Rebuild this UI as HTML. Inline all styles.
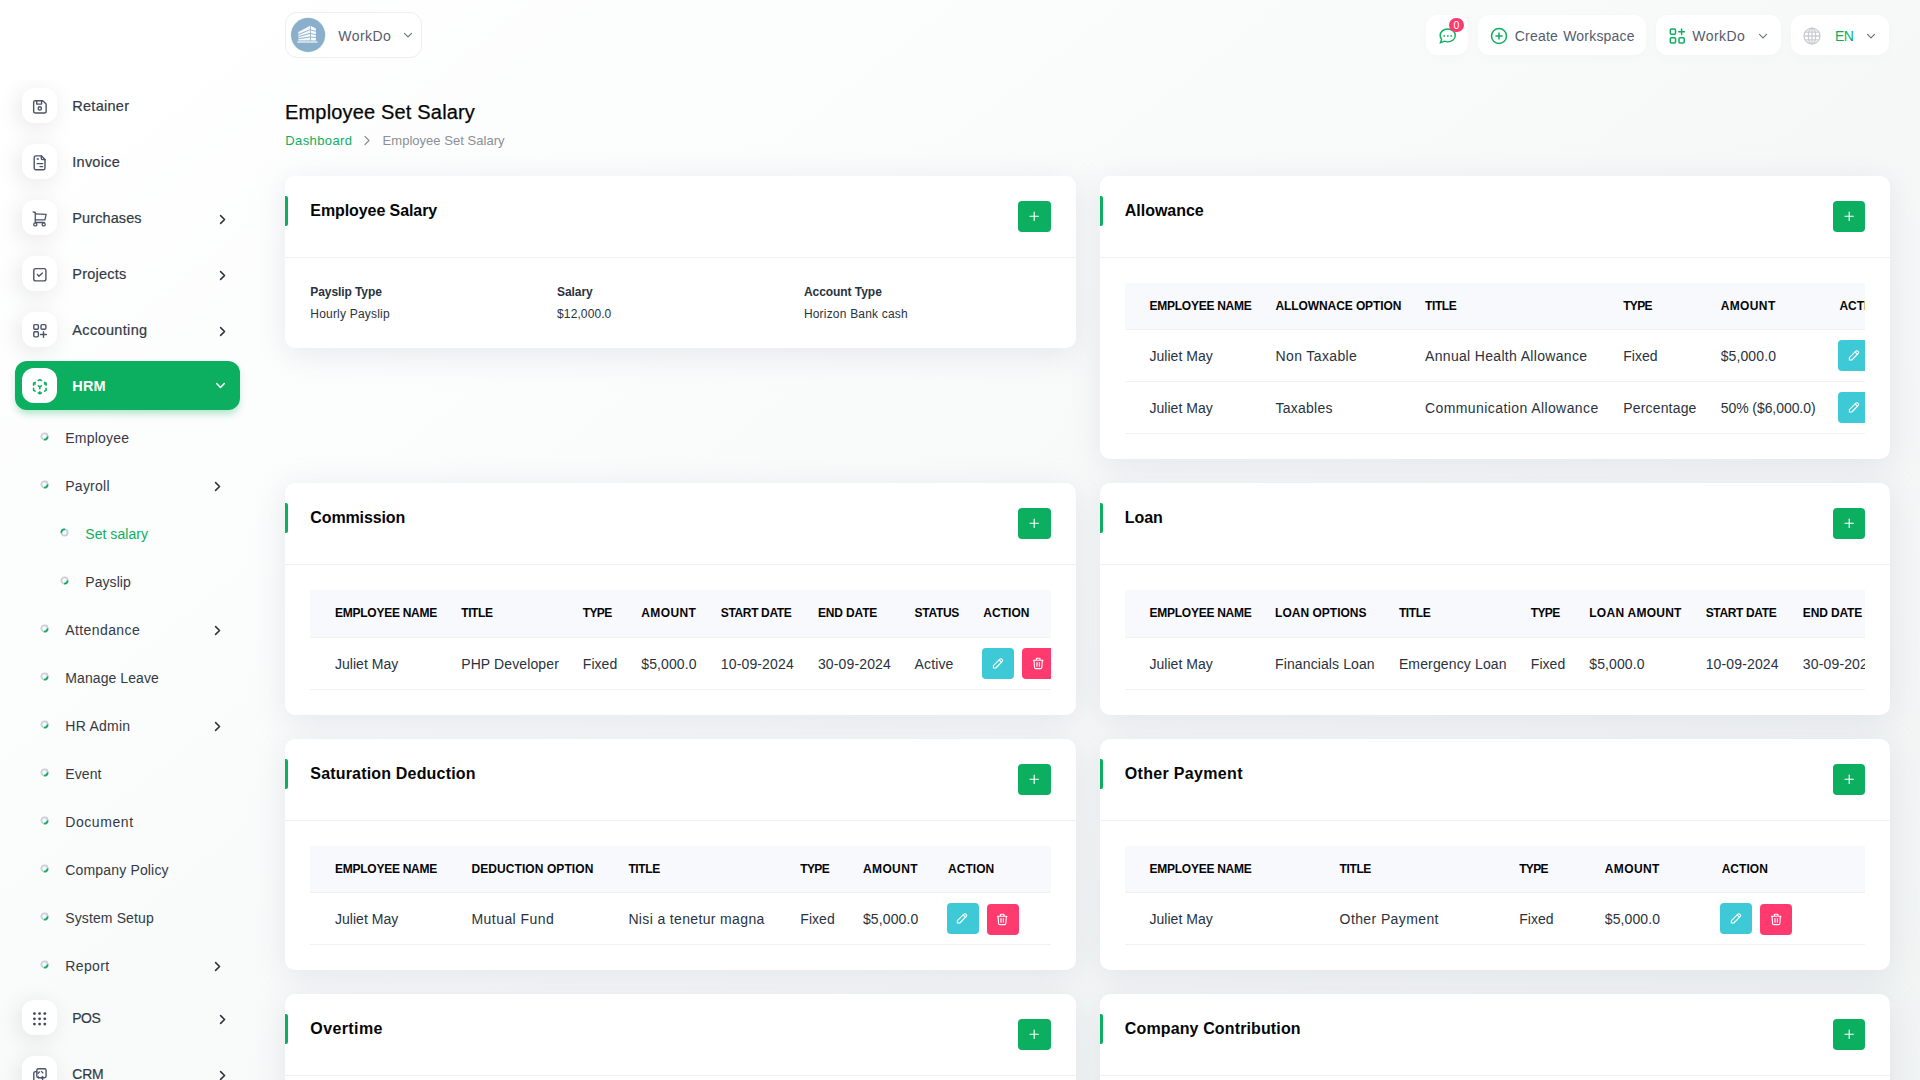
<!DOCTYPE html>
<html lang="en">
<head>
<meta charset="utf-8">
<title>Employee Set Salary</title>
<style>
*{box-sizing:border-box;margin:0;padding:0}
html,body{width:1920px;height:1080px;overflow:hidden}
body{font-family:"Liberation Sans",sans-serif;font-size:14px;color:#293240;position:relative;background:#fff}
.bg{position:absolute;left:0;top:0;width:1920px;height:1300px;background:linear-gradient(141.55deg,rgba(240,244,243,0) 3.46%,#eff3f2 99.86%),#ffffff}
svg{display:block}
a{text-decoration:none;color:inherit}
.side{position:absolute;left:0;top:80px;width:280px;height:1000px;overflow:hidden}
.mi{position:absolute;left:15px;width:225px;height:48px;border-radius:12px}
.mi .ic{position:absolute;left:7px;top:6.5px;width:35px;height:35px;border-radius:12px;background:#fff;box-shadow:-3px 4px 23px rgba(0,0,0,.1)}
.mi .tx{position:absolute;left:57.3px;top:0;line-height:48px;font-size:14.5px;color:#333a45;-webkit-text-stroke:.2px #333a45;white-space:nowrap}
.mi .ch{position:absolute;left:200.550px;top:19.400px}
.mi.act{height:48.700px;background:#0caf60;box-shadow:0 5px 7px -1px rgba(12,175,96,.3)}
.mi.act .tx{color:#fff;font-weight:700;-webkit-text-stroke:0;line-height:50px}
.mi.act .ic{box-shadow:none}
.mi.act .ch{left:198.950px;top:18.100px}
.si{position:absolute;left:0;width:260px;height:48px}
.si .bl{position:absolute;top:18.800px;width:9px;height:9px}
.si .tx{position:absolute;top:0;line-height:48px;font-size:14px;color:#333a45;white-space:nowrap}
.si .ch{position:absolute;left:210.650px;top:18.600px}
.si.l1 .bl{left:39.600px}.si.l1 .tx{left:65.300px}
.si.l2 .bl{left:59.600px}.si.l2 .tx{left:85.300px}
.si.on .tx{color:#0caf60}
.pill{position:absolute;background:#fff;border-radius:12px;height:40px;top:15px;box-shadow:0 3px 10px rgba(0,0,0,.018);font-size:14px;color:#555c6e;line-height:43.400px;white-space:nowrap}
.pill>span,.pill>svg{position:absolute}
.ws{position:absolute;left:285px;top:12px;width:137px;height:46px;border:1px solid #eeeeee;border-radius:12px;background:rgba(255,255,255,.7)}
.ws>span,.ws>svg{position:absolute}
.h1{position:absolute;left:285px;top:99px;font-weight:400;font-size:20px;line-height:26px;color:#060606;-webkit-text-stroke:.25px #060606;white-space:nowrap}
.bc{position:absolute;left:285.300px;top:132px;font-size:13px;line-height:18px;color:#8b8f96;white-space:nowrap}
.bc a{color:#0caf60}
.bc svg{position:absolute;left:77.900px;top:2.500px}
.bc b{position:absolute;left:97.300px;top:0;font-weight:400}
.card{position:absolute;width:790.500px;background:#fff;border-radius:10px;box-shadow:0 6px 30px rgba(182,186,203,.3)}
.card.L{left:285px}.card.R{left:1099.500px}
.ch1{position:relative;height:82px;border-bottom:1px solid #f1f1f1}
.ch1:before{content:"";position:absolute;left:0;top:20px;width:3px;height:30px;background:#0caf60;border-radius:0 2px 2px 0}
.ch1 h5{position:absolute;left:25.300px;top:24px;font-size:16px;line-height:22px;font-weight:700;color:#060606;white-space:nowrap}
.add{position:absolute;right:25px;top:25px;width:32.300px;height:31px;border-radius:4px;background:#0caf60;display:flex;align-items:center;justify-content:center}
.cb{padding:25px}
.tw{width:740.500px;overflow:hidden}
table{border-collapse:collapse;table-layout:fixed}
th{height:47px;background:#f8f9fd;font-size:12px;font-weight:700;color:#060606;text-align:left;padding:0 0 0 12px;white-space:nowrap;border-bottom:1px solid #f1f1f1;overflow:hidden}
td{height:52px;font-size:14px;color:#293240;text-align:left;padding:0 0 0 12px;white-space:nowrap;border-bottom:1px solid #f1f1f1;overflow:hidden}
th:first-child,td:first-child{padding-left:25px}
td>span{position:relative;top:1px}
.ab{display:inline-flex;vertical-align:middle;width:32px;height:31px;border-radius:4px;align-items:center;justify-content:center}
.ab.e{background:#3ec9d6;margin-left:-1.500px;margin-right:8px}.ab.d{background:#ff3a6e}
.lb{font-size:12px;font-weight:700;color:#293240;line-height:18px}
.vl{font-size:12px;color:#293240;line-height:18px;margin-top:3.600px}
</style>
</head>
<body>
<div class="bg"></div>
<nav class="side">
<a class="mi" style="top:1.5px"><span class="ic"><svg width="35" height="35" viewBox="0 0 35 35" fill="none" stroke="#4b5567" stroke-width="1.4" stroke-linecap="round" stroke-linejoin="round"><path d="M13.250 12.750H20.700L24.150 16.100V23.450A1.600 1.600 0 0 1 22.550 25.050H13.250A1.600 1.600 0 0 1 11.650 23.450V14.350A1.600 1.600 0 0 1 13.250 12.750Z"/><path d="M14.700 12.900V16.100H19.600V12.900"/><circle cx="17.800" cy="20.400" r="1.600"/></svg></span><span class="tx"><span style="letter-spacing:0.268px">Retainer</span></span></a>
<a class="mi" style="top:57.5px"><span class="ic"><svg width="35" height="35" viewBox="0 0 35 35" fill="none" stroke="#4b5567" stroke-width="1.4" stroke-linecap="round" stroke-linejoin="round"><path d="M19.300 11.850H13.900A1.700 1.700 0 0 0 12.200 13.550V24.100A1.700 1.700 0 0 0 13.900 25.800H21.300A1.700 1.700 0 0 0 23 24.100V15.600Z"/><path d="M19.300 11.850V14.500A1.100 1.100 0 0 0 20.400 15.600H23"/><path d="M15.200 15.050H16.400M15.200 19.650H20.700M18 22.600H20.700"/></svg></span><span class="tx"><span style="letter-spacing:0.243px">Invoice</span></span></a>
<a class="mi" style="top:113.5px"><span class="ic"><svg width="35" height="35" viewBox="0 0 35 35" fill="none" stroke="#4b5567" stroke-width="1.3" stroke-linecap="round" stroke-linejoin="round"><path d="M11.100 11.900 13.300 12.500V22.500H22.100"/><path d="M13.300 13.850 24.100 14.450 22.900 19.900H13.300"/><circle cx="13.300" cy="24.400" r="1.550"/><circle cx="21.700" cy="24.400" r="1.550"/></svg></span><span class="tx"><span style="letter-spacing:0.099px">Purchases</span></span><svg class="ch" width="13" height="13" viewBox="0 0 13 13" fill="none" stroke="#2f3136" stroke-width="1.550" stroke-linecap="round" stroke-linejoin="round"><path d="M4.600 2.650 8.550 6.500 4.600 10.350"/></svg></a>
<a class="mi" style="top:169.5px"><span class="ic"><svg width="35" height="35" viewBox="0 0 35 35" fill="none" stroke="#4b5567" stroke-width="1.4" stroke-linecap="round" stroke-linejoin="round"><rect x="11.800" y="12.600" width="12.100" height="12.300" rx="2"/><path d="M15.400 18.400 16.900 20.200 20.400 16.900"/></svg></span><span class="tx"><span style="letter-spacing:0.227px">Projects</span></span><svg class="ch" width="13" height="13" viewBox="0 0 13 13" fill="none" stroke="#2f3136" stroke-width="1.550" stroke-linecap="round" stroke-linejoin="round"><path d="M4.600 2.650 8.550 6.500 4.600 10.350"/></svg></a>
<a class="mi" style="top:225.5px"><span class="ic"><svg width="35" height="35" viewBox="0 0 35 35" fill="none" stroke="#4b5567" stroke-width="1.4" stroke-linecap="round" stroke-linejoin="round"><rect x="11.800" y="12.600" width="4.600" height="4.700" rx="1.100"/><rect x="19" y="12.600" width="4.900" height="4.700" rx="1.100"/><rect x="11.800" y="19.800" width="4.600" height="5.100" rx="1.100"/><path d="M21.500 19.700V25.300M18.600 22.450H24.400"/></svg></span><span class="tx"><span style="letter-spacing:0.342px">Accounting</span></span><svg class="ch" width="13" height="13" viewBox="0 0 13 13" fill="none" stroke="#2f3136" stroke-width="1.550" stroke-linecap="round" stroke-linejoin="round"><path d="M4.600 2.650 8.550 6.500 4.600 10.350"/></svg></a>
<a class="mi act" style="top:281px"><span class="ic"><svg width="35" height="35" viewBox="0 0 35 35" fill="none" stroke="#0caf60" stroke-width="2.0" stroke-linecap="round" stroke-linejoin="round"><g transform="translate(8.490 9.340) scale(.78)"><path d="M6 17.600l-2-1.100v-2.500M4 10v-2.500l2-1.120M10 4.100l2-1.100l2 1.100M18 6.400l2 1.100v2.500M20 14v2.500l-2 1.120M14 19.900l-2 1.100l-2-1.100M12 12l2-1.100M18 8.600l2-1.100M12 12v2.500M12 18.500v2.500M12 12l-2-1.120M6 8.600l-2-1.100"/></g></svg></span><span class="tx"><span style="letter-spacing:0.167px">HRM</span></span><svg class="ch" width="13" height="13" viewBox="0 0 13 13" fill="none" stroke="#fff" stroke-width="1.550" stroke-linecap="round" stroke-linejoin="round"><path d="M2.650 4.500 6.500 8.500 10.350 4.500"/></svg></a>
<a class="mi" style="top:913.5px"><span class="ic"><svg width="35" height="35" viewBox="0 0 35 35" fill="#3f4859"><circle cx="12.4" cy="13.6" r="1.400"/><circle cx="12.4" cy="18.8" r="1.400"/><circle cx="12.4" cy="24.1" r="1.400"/><circle cx="17.6" cy="13.6" r="1.400"/><circle cx="17.6" cy="18.8" r="1.400"/><circle cx="17.6" cy="24.1" r="1.400"/><circle cx="22.8" cy="13.6" r="1.400"/><circle cx="22.8" cy="18.8" r="1.400"/><circle cx="22.8" cy="24.1" r="1.400"/></svg></span><span class="tx"><span style="font-size:13.9px;letter-spacing:-0.464px">POS</span></span><svg class="ch" width="13" height="13" viewBox="0 0 13 13" fill="none" stroke="#2f3136" stroke-width="1.550" stroke-linecap="round" stroke-linejoin="round"><path d="M4.600 2.650 8.550 6.500 4.600 10.350"/></svg></a>
<a class="mi" style="top:969.5px"><span class="ic"><svg width="35" height="35" viewBox="0 0 35 35" fill="none" stroke="#4b5567" stroke-width="1.4" stroke-linecap="round" stroke-linejoin="round"><rect x="14.800" y="12.800" width="9.300" height="9" rx="1.700"/><path d="M14.800 15.600H13.500A1.700 1.700 0 0 0 11.800 17.300V24.500"/><path d="M16 17.300 17.400 15.900M19.600 15.600 20.800 16.900M16.200 20.800 16.700 21.800M19.400 21.900 20.600 20.500V23.500"/></svg></span><span class="tx"><span style="font-size:13.9px;letter-spacing:-0.172px">CRM</span></span><svg class="ch" width="13" height="13" viewBox="0 0 13 13" fill="none" stroke="#2f3136" stroke-width="1.550" stroke-linecap="round" stroke-linejoin="round"><path d="M4.600 2.650 8.550 6.500 4.600 10.350"/></svg></a>
<a class="si l1" style="top:333.5px"><svg class="bl" width="9" height="9" viewBox="0 0 9 9" fill="none" stroke-linecap="round"><circle cx="4.500" cy="4.500" r="3.150" stroke="#c8cdd9" stroke-width="1.700"/><path d="M7.600 5.000A3.150 3.150 0 0 1 4.800 7.640" stroke="#0caf60" stroke-width="1.700"/></svg><span class="tx"><span style="letter-spacing:0.217px">Employee</span></span></a>
<a class="si l1" style="top:381.5px"><svg class="bl" width="9" height="9" viewBox="0 0 9 9" fill="none" stroke-linecap="round"><circle cx="4.500" cy="4.500" r="3.150" stroke="#c8cdd9" stroke-width="1.700"/><path d="M7.600 5.000A3.150 3.150 0 0 1 4.800 7.640" stroke="#0caf60" stroke-width="1.700"/></svg><span class="tx"><span style="letter-spacing:0.234px">Payroll</span></span><svg class="ch" width="13" height="13" viewBox="0 0 13 13" fill="none" stroke="#2f3136" stroke-width="1.550" stroke-linecap="round" stroke-linejoin="round"><path d="M4.600 2.650 8.550 6.500 4.600 10.350"/></svg></a>
<a class="si l2 on" style="top:429.5px"><svg class="bl" width="9" height="9" viewBox="0 0 9 9" fill="none" stroke-linecap="round"><circle cx="4.500" cy="4.500" r="3.150" stroke="#c8cdd9" stroke-width="1.700"/><path d="M1.350 4.300A3.150 3.150 0 0 1 4.300 1.350" stroke="#0caf60" stroke-width="1.700"/></svg><span class="tx"><span style="letter-spacing:0.042px">Set salary</span></span></a>
<a class="si l2" style="top:477.5px"><svg class="bl" width="9" height="9" viewBox="0 0 9 9" fill="none" stroke-linecap="round"><circle cx="4.500" cy="4.500" r="3.150" stroke="#c8cdd9" stroke-width="1.700"/><path d="M7.600 5.000A3.150 3.150 0 0 1 4.800 7.640" stroke="#0caf60" stroke-width="1.700"/></svg><span class="tx"><span style="letter-spacing:0.056px">Payslip</span></span></a>
<a class="si l1" style="top:525.5px"><svg class="bl" width="9" height="9" viewBox="0 0 9 9" fill="none" stroke-linecap="round"><circle cx="4.500" cy="4.500" r="3.150" stroke="#c8cdd9" stroke-width="1.700"/><path d="M7.600 5.000A3.150 3.150 0 0 1 4.800 7.640" stroke="#0caf60" stroke-width="1.700"/></svg><span class="tx"><span style="letter-spacing:0.394px">Attendance</span></span><svg class="ch" width="13" height="13" viewBox="0 0 13 13" fill="none" stroke="#2f3136" stroke-width="1.550" stroke-linecap="round" stroke-linejoin="round"><path d="M4.600 2.650 8.550 6.500 4.600 10.350"/></svg></a>
<a class="si l1" style="top:573.5px"><svg class="bl" width="9" height="9" viewBox="0 0 9 9" fill="none" stroke-linecap="round"><circle cx="4.500" cy="4.500" r="3.150" stroke="#c8cdd9" stroke-width="1.700"/><path d="M7.600 5.000A3.150 3.150 0 0 1 4.800 7.640" stroke="#0caf60" stroke-width="1.700"/></svg><span class="tx"><span style="letter-spacing:0.083px">Manage Leave</span></span></a>
<a class="si l1" style="top:621.5px"><svg class="bl" width="9" height="9" viewBox="0 0 9 9" fill="none" stroke-linecap="round"><circle cx="4.500" cy="4.500" r="3.150" stroke="#c8cdd9" stroke-width="1.700"/><path d="M7.600 5.000A3.150 3.150 0 0 1 4.800 7.640" stroke="#0caf60" stroke-width="1.700"/></svg><span class="tx"><span style="letter-spacing:0.26px">HR Admin</span></span><svg class="ch" width="13" height="13" viewBox="0 0 13 13" fill="none" stroke="#2f3136" stroke-width="1.550" stroke-linecap="round" stroke-linejoin="round"><path d="M4.600 2.650 8.550 6.500 4.600 10.350"/></svg></a>
<a class="si l1" style="top:669.5px"><svg class="bl" width="9" height="9" viewBox="0 0 9 9" fill="none" stroke-linecap="round"><circle cx="4.500" cy="4.500" r="3.150" stroke="#c8cdd9" stroke-width="1.700"/><path d="M7.600 5.000A3.150 3.150 0 0 1 4.800 7.640" stroke="#0caf60" stroke-width="1.700"/></svg><span class="tx"><span style="letter-spacing:0.081px">Event</span></span></a>
<a class="si l1" style="top:717.5px"><svg class="bl" width="9" height="9" viewBox="0 0 9 9" fill="none" stroke-linecap="round"><circle cx="4.500" cy="4.500" r="3.150" stroke="#c8cdd9" stroke-width="1.700"/><path d="M7.600 5.000A3.150 3.150 0 0 1 4.800 7.640" stroke="#0caf60" stroke-width="1.700"/></svg><span class="tx"><span style="letter-spacing:0.559px">Document</span></span></a>
<a class="si l1" style="top:765.5px"><svg class="bl" width="9" height="9" viewBox="0 0 9 9" fill="none" stroke-linecap="round"><circle cx="4.500" cy="4.500" r="3.150" stroke="#c8cdd9" stroke-width="1.700"/><path d="M7.600 5.000A3.150 3.150 0 0 1 4.800 7.640" stroke="#0caf60" stroke-width="1.700"/></svg><span class="tx"><span style="letter-spacing:0.162px">Company Policy</span></span></a>
<a class="si l1" style="top:813.5px"><svg class="bl" width="9" height="9" viewBox="0 0 9 9" fill="none" stroke-linecap="round"><circle cx="4.500" cy="4.500" r="3.150" stroke="#c8cdd9" stroke-width="1.700"/><path d="M7.600 5.000A3.150 3.150 0 0 1 4.800 7.640" stroke="#0caf60" stroke-width="1.700"/></svg><span class="tx"><span style="letter-spacing:0.112px">System Setup</span></span></a>
<a class="si l1" style="top:861.5px"><svg class="bl" width="9" height="9" viewBox="0 0 9 9" fill="none" stroke-linecap="round"><circle cx="4.500" cy="4.500" r="3.150" stroke="#c8cdd9" stroke-width="1.700"/><path d="M7.600 5.000A3.150 3.150 0 0 1 4.800 7.640" stroke="#0caf60" stroke-width="1.700"/></svg><span class="tx"><span style="letter-spacing:0.362px">Report</span></span><svg class="ch" width="13" height="13" viewBox="0 0 13 13" fill="none" stroke="#2f3136" stroke-width="1.550" stroke-linecap="round" stroke-linejoin="round"><path d="M4.600 2.650 8.550 6.500 4.600 10.350"/></svg></a>
</nav>
<div id="hdr">
<div class="ws"><svg style="left:3.900px;top:3.900px" width="36" height="36" viewBox="0 0 36 36"><circle cx="18.100" cy="17.900" r="17.500" fill="#d2efdf"/><circle cx="18.100" cy="17.900" r="17" fill="#8aaecb"/><path d="M8.400 14.950 20.100 8.700V23.500H8.400Z" fill="#f4f8fb"/><path d="M20.900 9.100 25.900 11.400V23.500H20.900Z" fill="#fbfdfe"/><path d="M8.400 17.500 20.100 12.700M8.400 19.700 20.100 16.400M8.400 21.700 20.100 20M20.900 13 25.900 14.400M20.900 16.600 25.900 17.500M20.900 20.100 25.900 20.500" stroke="#8aaecb" stroke-width=".9" fill="none"/><rect x="7.200" y="24.100" width="20.300" height="1.800" fill="#ffffff" opacity=".62"/></svg>
<span style="left:52.300px;top:0;line-height:46.600px;font-size:14px;color:#555c6e"><span style="letter-spacing:0.451px">WorkDo</span></span>
<svg style="left:115.75px;top:15.7px" width="12" height="12" viewBox="0 0 12 12" fill="none" stroke="#6a7080" stroke-width="1.150" stroke-linecap="round" stroke-linejoin="round"><path d="M2.500 4.300 6 7.800 9.500 4.300"/></svg>
</div>
<div class="pill" style="left:1426px;width:42px">
<svg style="left:12px;top:12px" width="19" height="18" viewBox="0 0 19 18" fill="none" stroke="#0caf60" stroke-width="1.400" stroke-linecap="round" stroke-linejoin="round"><path d="M9.750 2C14 2 17.300 4.900 17.300 8.450C17.300 12 14 14.900 9.750 14.900C8.750 14.900 7.550 14.650 6.450 14.200L2.200 15.900L3.650 12.300C2.650 11.200 2.150 9.900 2.150 8.450C2.150 4.900 5.500 2 9.750 2Z"/><path d="M6.200 9h.01M9.800 9h.01M13.300 9h.01" stroke-width="1.600" stroke-linecap="square"/></svg>
<span style="left:23px;top:3px;width:15px;height:14px;border-radius:7.500px;background:#ff3a6e;color:#fff;font-size:10.500px;line-height:14.500px;text-align:center">0</span>
</div>
<div class="pill" style="left:1478px;width:168px">
<svg style="left:12.400px;top:12px" width="18" height="18" viewBox="0 0 18 18" fill="none" stroke="#0caf60" stroke-width="1.500" stroke-linecap="round"><circle cx="9" cy="9" r="7.500"/><path d="M9 5.900v6.200M5.900 9h6.200"/></svg>
<span style="left:36.800px;top:0;word-spacing:1.2px"><span style="letter-spacing:0.188px">Create Workspace</span></span>
</div>
<div class="pill" style="left:1656px;width:125px">
<svg style="left:13px;top:13px" width="17" height="17" viewBox="0 0 17 17" fill="none" stroke="#0caf60" stroke-width="1.500" stroke-linecap="round" stroke-linejoin="round"><rect x="1.300" y="1.100" width="5.200" height="5.200" rx="1"/><rect x="1.300" y="9.800" width="5.200" height="5.200" rx="1"/><rect x="10" y="9.800" width="5.200" height="5.200" rx="1"/><path d="M12.600 0.900v5.600M9.800 3.700h5.600"/></svg>
<span style="left:36.300px;top:0"><span style="letter-spacing:0.451px">WorkDo</span></span>
<svg style="left:101.1px;top:14.5px" width="12" height="12" viewBox="0 0 12 12" fill="none" stroke="#6a7080" stroke-width="1.150" stroke-linecap="round" stroke-linejoin="round"><path d="M2.500 4.300 6 7.800 9.500 4.300"/></svg>
</div>
<div class="pill" style="left:1791px;width:98px">
<svg style="left:12.200px;top:12px" width="18" height="18" viewBox="0 0 18 18" fill="none" stroke="#c9cdd3" stroke-width="1.300" stroke-linecap="round"><circle cx="9" cy="9" r="7.950"/><path d="M1.100 9h15.800M2.300 5.200h13.400M2.300 12.800h13.400"/><ellipse cx="9" cy="9" rx="3.700" ry="7.950"/><path d="M9 1.100v15.800"/></svg>
<span style="left:44px;top:0;color:#0caf60"><span style="letter-spacing:-0.562px">EN</span></span>
<svg style="left:73.9px;top:14.5px" width="12" height="12" viewBox="0 0 12 12" fill="none" stroke="#6a7080" stroke-width="1.150" stroke-linecap="round" stroke-linejoin="round"><path d="M2.500 4.300 6 7.800 9.500 4.300"/></svg>
</div>
</div>
<h4 class="h1"><span style="letter-spacing:0.173px">Employee Set Salary</span></h4>
<div class="bc"><a><span style="letter-spacing:0.387px">Dashboard</span></a><svg width="8" height="11" viewBox="0 0 8 11" fill="none" stroke="#8b8f96" stroke-width="1.200" stroke-linecap="round" stroke-linejoin="round"><path d="M2 1.500 6 5.500 2 9.500"/></svg><b><span style="letter-spacing:0.028px">Employee Set Salary</span></b></div>
<div id="cards">
<div class="card L" style="top:176px"><div class="ch1"><h5><span style="letter-spacing:-0.083px">Employee Salary</span></h5><a class="add"><svg width="14.4" height="14.4" viewBox="0 0 24 24" fill="none" stroke="#fff" stroke-width="1.900" stroke-linecap="round" stroke-linejoin="round"><path d="M12 5v14M5 12h14"/></svg></a></div><div class="cb" style="display:flex;padding-left:25.300px"><div style="width:246.8px"><div class="lb"><span style="letter-spacing:-0.085px">Payslip Type</span></div><div class="vl"><span style="letter-spacing:0.201px">Hourly Payslip</span></div></div><div style="width:246.8px"><div class="lb"><span style="letter-spacing:-0.094px">Salary</span></div><div class="vl"><span style="letter-spacing:0.101px">$12,000.0</span></div></div><div><div class="lb"><span style="letter-spacing:-0.048px">Account Type</span></div><div class="vl"><span style="letter-spacing:0.194px">Horizon Bank cash</span></div></div></div></div>
<div class="card R" style="top:176px"><div class="ch1"><h5><span style="letter-spacing:-0.024px">Allowance</span></h5><a class="add"><svg width="14.4" height="14.4" viewBox="0 0 24 24" fill="none" stroke="#fff" stroke-width="1.900" stroke-linecap="round" stroke-linejoin="round"><path d="M12 5v14M5 12h14"/></svg></a></div><div class="cb"><div class="tw"><table style="width:800.0px"><colgroup><col style="width:139.0px"><col style="width:149.5px"><col style="width:198.2px"><col style="width:97.5px"><col style="width:118.7px"><col style="width:97.1px"></colgroup><thead><tr><th style="height:46px"><span style="letter-spacing:-0.256px">EMPLOYEE NAME</span></th><th style="height:46px"><span style="letter-spacing:-0.094px">ALLOWNACE OPTION</span></th><th style="height:46px"><span style="letter-spacing:-0.391px">TITLE</span></th><th style="height:46px"><span style="letter-spacing:-0.66px">TYPE</span></th><th style="height:46px"><span style="letter-spacing:0.375px">AMOUNT</span></th><th style="height:46px"><span style="letter-spacing:0.026px">ACTION</span></th></tr></thead><tbody><tr><td><span style="letter-spacing:0.027px">Juliet May</span></td><td><span style="letter-spacing:0.379px">Non Taxable</span></td><td><span style="letter-spacing:0.327px">Annual Health Allowance</span></td><td><span style="letter-spacing:0.056px">Fixed</span></td><td><span style="letter-spacing:0.105px">$5,000.0</span></td><td><a class="ab e"><svg width="14.4" height="14.4" viewBox="0 0 24 24" fill="none" stroke="#fff" stroke-width="1.900" stroke-linecap="round" stroke-linejoin="round"><path d="M4 20h4l10.500-10.500a1.500 1.500 0 0 0-4-4l-10.500 10.500v4"/><path d="M13.500 6.500l4 4"/></svg></a><a class="ab d" style="position:relative;top:1px"><svg width="14.4" height="14.4" viewBox="0 0 24 24" fill="none" stroke="#fff" stroke-width="1.900" stroke-linecap="round" stroke-linejoin="round"><path d="M4 7h16M10 11v6M14 11v6M5 7l1 12a2 2 0 0 0 2 2h8a2 2 0 0 0 2-2l1-12M9 7v-2.200a1 1 0 0 1 1-1h4a1 1 0 0 1 1 1v2.200"/></svg></a></td></tr><tr><td><span style="letter-spacing:0.027px">Juliet May</span></td><td><span style="letter-spacing:0.246px">Taxables</span></td><td><span style="letter-spacing:0.411px">Communication Allowance</span></td><td><span style="letter-spacing:0.178px">Percentage</span></td><td><span style="letter-spacing:-0.066px">50% ($6,000.0)</span></td><td><a class="ab e"><svg width="14.4" height="14.4" viewBox="0 0 24 24" fill="none" stroke="#fff" stroke-width="1.900" stroke-linecap="round" stroke-linejoin="round"><path d="M4 20h4l10.500-10.500a1.500 1.500 0 0 0-4-4l-10.500 10.500v4"/><path d="M13.500 6.500l4 4"/></svg></a><a class="ab d" style="position:relative;top:1px"><svg width="14.4" height="14.4" viewBox="0 0 24 24" fill="none" stroke="#fff" stroke-width="1.900" stroke-linecap="round" stroke-linejoin="round"><path d="M4 7h16M10 11v6M14 11v6M5 7l1 12a2 2 0 0 0 2 2h8a2 2 0 0 0 2-2l1-12M9 7v-2.200a1 1 0 0 1 1-1h4a1 1 0 0 1 1 1v2.200"/></svg></a></td></tr></tbody></table></div></div></div>
<div class="card L" style="top:483px"><div class="ch1"><h5><span style="letter-spacing:-0.114px">Commission</span></h5><a class="add"><svg width="14.4" height="14.4" viewBox="0 0 24 24" fill="none" stroke="#fff" stroke-width="1.900" stroke-linecap="round" stroke-linejoin="round"><path d="M12 5v14M5 12h14"/></svg></a></div><div class="cb"><div class="tw"><table style="width:760.0px"><colgroup><col style="width:139.2px"><col style="width:121.6px"><col style="width:58.5px"><col style="width:79.5px"><col style="width:97.1px"><col style="width:96.7px"><col style="width:68.8px"><col style="width:98.6px"></colgroup><thead><tr><th style="height:47px"><span style="letter-spacing:-0.256px">EMPLOYEE NAME</span></th><th style="height:47px"><span style="letter-spacing:-0.391px">TITLE</span></th><th style="height:47px"><span style="letter-spacing:-0.66px">TYPE</span></th><th style="height:47px"><span style="letter-spacing:0.375px">AMOUNT</span></th><th style="height:47px"><span style="letter-spacing:-0.355px">START DATE</span></th><th style="height:47px"><span style="letter-spacing:-0.143px">END DATE</span></th><th style="height:47px"><span style="letter-spacing:-0.292px">STATUS</span></th><th style="height:47px"><span style="letter-spacing:0.026px">ACTION</span></th></tr></thead><tbody><tr><td><span style="letter-spacing:0.027px">Juliet May</span></td><td><span style="letter-spacing:0.118px">PHP Developer</span></td><td><span style="letter-spacing:0.056px">Fixed</span></td><td><span style="letter-spacing:0.105px">$5,000.0</span></td><td><span style="letter-spacing:0.144px">10-09-2024</span></td><td><span style="letter-spacing:0.144px">30-09-2024</span></td><td><span style="letter-spacing:0.135px">Active</span></td><td><a class="ab e"><svg width="14.4" height="14.4" viewBox="0 0 24 24" fill="none" stroke="#fff" stroke-width="1.900" stroke-linecap="round" stroke-linejoin="round"><path d="M4 20h4l10.500-10.500a1.500 1.500 0 0 0-4-4l-10.500 10.500v4"/><path d="M13.500 6.500l4 4"/></svg></a><a class="ab d"><svg width="14.4" height="14.4" viewBox="0 0 24 24" fill="none" stroke="#fff" stroke-width="1.900" stroke-linecap="round" stroke-linejoin="round"><path d="M4 7h16M10 11v6M14 11v6M5 7l1 12a2 2 0 0 0 2 2h8a2 2 0 0 0 2-2l1-12M9 7v-2.200a1 1 0 0 1 1-1h4a1 1 0 0 1 1 1v2.200"/></svg></a></td></tr></tbody></table></div></div></div>
<div class="card R" style="top:483px"><div class="ch1"><h5><span style="letter-spacing:-0.078px">Loan</span></h5><a class="add"><svg width="14.4" height="14.4" viewBox="0 0 24 24" fill="none" stroke="#fff" stroke-width="1.900" stroke-linecap="round" stroke-linejoin="round"><path d="M12 5v14M5 12h14"/></svg></a></div><div class="cb"><div class="tw"><table style="width:763.5px"><colgroup><col style="width:138.6px"><col style="width:123.8px"><col style="width:131.9px"><col style="width:58.5px"><col style="width:116.4px"><col style="width:97.2px"><col style="width:97.1px"></colgroup><thead><tr><th style="height:47px"><span style="letter-spacing:-0.256px">EMPLOYEE NAME</span></th><th style="height:47px"><span style="letter-spacing:0.005px">LOAN OPTIONS</span></th><th style="height:47px"><span style="letter-spacing:-0.391px">TITLE</span></th><th style="height:47px"><span style="letter-spacing:-0.66px">TYPE</span></th><th style="height:47px"><span style="letter-spacing:0.26px">LOAN AMOUNT</span></th><th style="height:47px"><span style="letter-spacing:-0.355px">START DATE</span></th><th style="height:47px"><span style="letter-spacing:-0.143px">END DATE</span></th></tr></thead><tbody><tr><td><span style="letter-spacing:0.027px">Juliet May</span></td><td><span style="letter-spacing:0.107px">Financials Loan</span></td><td><span style="letter-spacing:0.142px">Emergency Loan</span></td><td><span style="letter-spacing:0.056px">Fixed</span></td><td><span style="letter-spacing:0.105px">$5,000.0</span></td><td><span style="letter-spacing:0.144px">10-09-2024</span></td><td><span style="letter-spacing:0.144px">30-09-2024</span></td></tr></tbody></table></div></div></div>
<div class="card L" style="top:739px"><div class="ch1"><h5><span style="letter-spacing:0.18px">Saturation Deduction</span></h5><a class="add"><svg width="14.4" height="14.4" viewBox="0 0 24 24" fill="none" stroke="#fff" stroke-width="1.900" stroke-linecap="round" stroke-linejoin="round"><path d="M12 5v14M5 12h14"/></svg></a></div><div class="cb"><div class="tw"><table style="width:740.5px"><colgroup><col style="width:149.5px"><col style="width:156.9px"><col style="width:171.9px"><col style="width:62.7px"><col style="width:85.1px"><col style="width:114.4px"></colgroup><thead><tr><th style="height:46px"><span style="letter-spacing:-0.256px">EMPLOYEE NAME</span></th><th style="height:46px"><span style="letter-spacing:0.075px">DEDUCTION OPTION</span></th><th style="height:46px"><span style="letter-spacing:-0.391px">TITLE</span></th><th style="height:46px"><span style="letter-spacing:-0.66px">TYPE</span></th><th style="height:46px"><span style="letter-spacing:0.375px">AMOUNT</span></th><th style="height:46px"><span style="letter-spacing:0.026px">ACTION</span></th></tr></thead><tbody><tr><td><span style="letter-spacing:0.027px">Juliet May</span></td><td><span style="letter-spacing:0.44px">Mutual Fund</span></td><td><span style="letter-spacing:0.355px">Nisi a tenetur magna</span></td><td><span style="letter-spacing:0.056px">Fixed</span></td><td><span style="letter-spacing:0.105px">$5,000.0</span></td><td><a class="ab e"><svg width="14.4" height="14.4" viewBox="0 0 24 24" fill="none" stroke="#fff" stroke-width="1.900" stroke-linecap="round" stroke-linejoin="round"><path d="M4 20h4l10.500-10.500a1.500 1.500 0 0 0-4-4l-10.500 10.500v4"/><path d="M13.500 6.500l4 4"/></svg></a><a class="ab d" style="position:relative;top:1px"><svg width="14.4" height="14.4" viewBox="0 0 24 24" fill="none" stroke="#fff" stroke-width="1.900" stroke-linecap="round" stroke-linejoin="round"><path d="M4 7h16M10 11v6M14 11v6M5 7l1 12a2 2 0 0 0 2 2h8a2 2 0 0 0 2-2l1-12M9 7v-2.200a1 1 0 0 1 1-1h4a1 1 0 0 1 1 1v2.200"/></svg></a></td></tr></tbody></table></div></div></div>
<div class="card R" style="top:739px"><div class="ch1"><h5><span style="letter-spacing:0.325px">Other Payment</span></h5><a class="add"><svg width="14.4" height="14.4" viewBox="0 0 24 24" fill="none" stroke="#fff" stroke-width="1.900" stroke-linecap="round" stroke-linejoin="round"><path d="M12 5v14M5 12h14"/></svg></a></div><div class="cb"><div class="tw"><table style="width:740.5px"><colgroup><col style="width:203.1px"><col style="width:179.6px"><col style="width:85.6px"><col style="width:116.9px"><col style="width:155.3px"></colgroup><thead><tr><th style="height:46px"><span style="letter-spacing:-0.256px">EMPLOYEE NAME</span></th><th style="height:46px"><span style="letter-spacing:-0.391px">TITLE</span></th><th style="height:46px"><span style="letter-spacing:-0.66px">TYPE</span></th><th style="height:46px"><span style="letter-spacing:0.375px">AMOUNT</span></th><th style="height:46px"><span style="letter-spacing:0.026px">ACTION</span></th></tr></thead><tbody><tr><td><span style="letter-spacing:0.027px">Juliet May</span></td><td><span style="letter-spacing:0.397px">Other Payment</span></td><td><span style="letter-spacing:0.056px">Fixed</span></td><td><span style="letter-spacing:0.105px">$5,000.0</span></td><td><a class="ab e"><svg width="14.4" height="14.4" viewBox="0 0 24 24" fill="none" stroke="#fff" stroke-width="1.900" stroke-linecap="round" stroke-linejoin="round"><path d="M4 20h4l10.500-10.500a1.500 1.500 0 0 0-4-4l-10.500 10.500v4"/><path d="M13.500 6.500l4 4"/></svg></a><a class="ab d" style="position:relative;top:1px"><svg width="14.4" height="14.4" viewBox="0 0 24 24" fill="none" stroke="#fff" stroke-width="1.900" stroke-linecap="round" stroke-linejoin="round"><path d="M4 7h16M10 11v6M14 11v6M5 7l1 12a2 2 0 0 0 2 2h8a2 2 0 0 0 2-2l1-12M9 7v-2.200a1 1 0 0 1 1-1h4a1 1 0 0 1 1 1v2.200"/></svg></a></td></tr></tbody></table></div></div></div>
<div class="card L" style="top:994px;height:200px"><div class="ch1"><h5><span style="letter-spacing:0.396px">Overtime</span></h5><a class="add"><svg width="14.4" height="14.4" viewBox="0 0 24 24" fill="none" stroke="#fff" stroke-width="1.900" stroke-linecap="round" stroke-linejoin="round"><path d="M12 5v14M5 12h14"/></svg></a></div></div>
<div class="card R" style="top:994px;height:200px"><div class="ch1"><h5><span style="letter-spacing:0.13px">Company Contribution</span></h5><a class="add"><svg width="14.4" height="14.4" viewBox="0 0 24 24" fill="none" stroke="#fff" stroke-width="1.900" stroke-linecap="round" stroke-linejoin="round"><path d="M12 5v14M5 12h14"/></svg></a></div></div>
</div>
</body>
</html>
